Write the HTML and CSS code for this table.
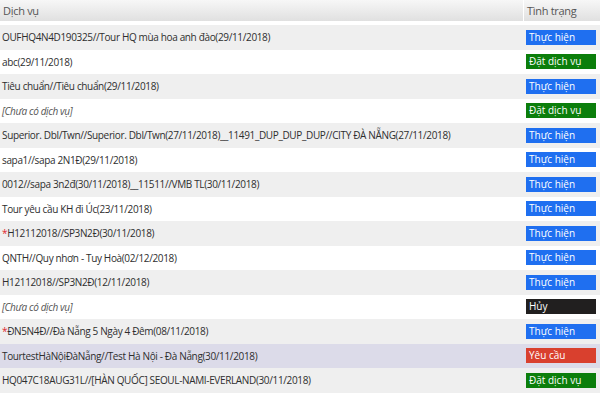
FILE: index.html
```html
<!DOCTYPE html>
<html lang="vi">
<head>
  <meta charset="UTF-8">
  <title>Dịch vụ</title>
  <link rel="stylesheet" href="styles.css">
</head>
<body>
<table class="service-table">
  <thead>
    <tr>
      <th class="col-service">Dịch vụ</th>
      <th class="col-status">Tình trạng</th>
    </tr>
  </thead>
  <tbody>
    <tr><td>OUFHQ4N4D190325//Tour HQ mùa hoa anh đào(29/11/2018)</td><td><span class="badge blue">Thực hiện</span></td></tr>
    <tr><td>abc(29/11/2018)</td><td><span class="badge green">Đặt dịch vụ</span></td></tr>
    <tr><td>Tiêu chuẩn//Tiêu chuẩn(29/11/2018)</td><td><span class="badge blue">Thực hiện</span></td></tr>
    <tr><td class="empty">[Chưa có dịch vụ]</td><td><span class="badge green">Đặt dịch vụ</span></td></tr>
    <tr><td>Superior. Dbl/Twn//Superior. Dbl/Twn(27/11/2018)__11491_DUP_DUP_DUP//CITY ĐÀ NẴNG(27/11/2018)</td><td><span class="badge blue">Thực hiện</span></td></tr>
    <tr><td>sapa1//sapa 2N1Đ(29/11/2018)</td><td><span class="badge blue">Thực hiện</span></td></tr>
    <tr><td>0012//sapa 3n2đ(30/11/2018)__11511//VMB TL(30/11/2018)</td><td><span class="badge blue">Thực hiện</span></td></tr>
    <tr><td>Tour yêu cầu KH đi Úc(23/11/2018)</td><td><span class="badge blue">Thực hiện</span></td></tr>
    <tr><td><span class="star">*</span>H12112018//SP3N2Đ(30/11/2018)</td><td><span class="badge blue">Thực hiện</span></td></tr>
    <tr><td>QNTH//Quy nhơn - Tuy Hoà(02/12/2018)</td><td><span class="badge blue">Thực hiện</span></td></tr>
    <tr><td>H12112018//SP3N2Đ(12/11/2018)</td><td><span class="badge blue">Thực hiện</span></td></tr>
    <tr><td class="empty">[Chưa có dịch vụ]</td><td><span class="badge black">Hủy</span></td></tr>
    <tr><td><span class="star">*</span>ĐN5N4Đ//Đà Nẵng 5 Ngày 4 Đêm(08/11/2018)</td><td><span class="badge blue">Thực hiện</span></td></tr>
    <tr class="selected"><td>TourtestHàNộiĐàNẵng//Test Hà Nội - Đà Nẵng(30/11/2018)</td><td><span class="badge red">Yêu cầu</span></td></tr>
    <tr><td>HQ047C18AUG31L//[HÀN QUỐC] SEOUL-NAMI-EVERLAND(30/11/2018)</td><td><span class="badge green">Đặt dịch vụ</span></td></tr>
  </tbody>
</table>
</body>
</html>
```

FILE: styles.css
```css
body {
  margin: 0;
  background-color: #fff;
  font-family: "Open Sans", "Liberation Sans", sans-serif;
  font-size: 10px;
  letter-spacing: -0.35px;
  color: #2e2e2e;
}

.service-table {
  width: 600px;
  border-collapse: separate;
  border-spacing: 0;
  table-layout: fixed;
}

/* tiêu đề bảng */
.service-table thead th {
  height: 21px;
  padding: 0 0 0 3px;
  text-align: left;
  font-weight: normal;
  font-size: 11px;
  letter-spacing: -0.3px;
  color: #555;
  background: linear-gradient(#f7f7f7, #e0e0e0);
  border-bottom: 4px solid #fff;
}

.col-status {
  width: 73px;
  border-left: 1px solid #fff;
}

.service-table tbody td {
  height: 24.5px;
  padding: 0 0 0 2px;
  white-space: nowrap;
  overflow: hidden;
  box-sizing: border-box;
}

.service-table tbody tr:nth-child(odd) td {
  background-color: #efefef;
}

.service-table tbody tr.selected td {
  background-color: #dcdbe9;
}

.service-table tbody td:last-child {
  padding-left: 3px;
}

.empty {
  font-style: italic;
  color: #555;
}

.star {
  color: #e0262e;
}

/* nhãn tình trạng */
.badge {
  display: block;
  width: 67px;
  height: 15px;
  line-height: 15px;
  padding-left: 3px;
  letter-spacing: 0;
  color: #fff;
}

.badge.blue { background-color: #1f6ff0; }
.badge.green { background-color: #0b7e0b; }
.badge.black { background-color: #211f1f; }
.badge.red { background-color: #d9402e; }
```
